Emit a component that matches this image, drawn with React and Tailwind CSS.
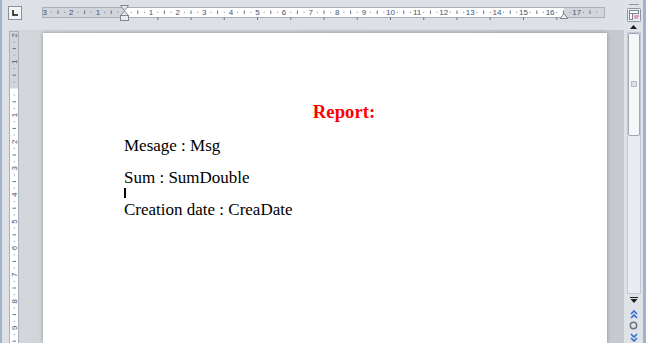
import React from "react";

const CM = 26.6;

function HRuler() {
  // local coords: svg placed at screen x=40, y=3
  const zero = 84.5;
  const left = 2;
  const right = 564;
  const indent = 524;
  const marks = [];
  for (let k = -13; k <= 72; k++) {
    const x = zero + (k * CM) / 4;
    if (x < left + 2 || x > right - 3 || k === 0) continue;
    if (k % 4 === 0) {
      marks.push(
        <text key={k} x={x} y={12.4} textAnchor="middle" fontSize="8" fontFamily="Liberation Sans, sans-serif" fill="#45536a">
          {Math.abs(k / 4)}
        </text>
      );
    } else if (k % 2 === 0) {
      marks.push(<rect key={k} x={x - 0.5} y={7.5} width={1} height={3.5} fill="#6a7381" />);
    } else {
      marks.push(<rect key={k} x={x - 0.5} y={8.8} width={1} height={1} fill="#7a8390" />);
    }
  }
  const tabs = [];
  for (let k = 1; zero + k * 33.25 < indent; k++) {
    tabs.push(<rect key={k} x={zero + k * 33.25 - 0.5} y={14.5} width={1} height={2.5} fill="#6d747d" />);
  }
  return (
    <svg width="570" height="21" className="block">
      <rect x={left + 0.5} y={4.5} width={right - left} height={10} fill="#ffffff" stroke="#a9b0b9" />
      <rect x={left + 1} y={5} width={zero - left - 1} height={9} fill="#d2d6db" />
      <rect x={indent} y={5} width={right - indent} height={9} fill="#d2d6db" />
      {marks}
      {tabs}
      {/* left indent markers */}
      <path d="M80.5 2.5 H88.5 L84.5 7.5 Z" fill="#e9ebee" stroke="#7d8692" />
      <path d="M84.5 8 L80.5 12.5 H88.5 Z" fill="#e9ebee" stroke="#7d8692" />
      <rect x={80.5} y={12.5} width={8} height={5} fill="#e9ebee" stroke="#7d8692" />
      {/* right indent */}
      <path d="M524 10.5 L520 15.5 H528 Z" fill="#e9ebee" stroke="#7d8692" />
    </svg>
  );
}

function VRuler() {
  // local coords: svg placed at screen x=9, y=30
  const zero = 58.5;
  const marks = [];
  for (let k = -9; k <= 40; k++) {
    const y = zero + (k * CM) / 4;
    if (y < 4 || y > 314 || k === 0) continue;
    if (k % 4 === 0) {
      marks.push(
        <text
          key={k}
          transform={`translate(5.4 ${y}) rotate(-90)`}
          x={0}
          y={3}
          textAnchor="middle"
          fontSize="8"
          fontFamily="Liberation Sans, sans-serif"
          fill="#45536a"
        >
          {Math.abs(k / 4)}
        </text>
      );
    } else if (k % 2 === 0) {
      marks.push(<rect key={k} x={3.5} y={y - 0.5} width={3.5} height={1} fill="#6a7381" />);
    } else {
      marks.push(<rect key={k} x={4.8} y={y - 0.5} width={1} height={1} fill="#7a8390" />);
    }
  }
  return (
    <svg width="11" height="313" className="block">
      <rect x={0.5} y={1.5} width={9} height={320} fill="#ffffff" stroke="#a9b0b9" />
      <rect x={1} y={2} width={8} height={zero - 2} fill="#d2d6db" />
      {marks}
    </svg>
  );
}

function Scrollbar() {
  return (
    <div className="flex w-[19px] flex-col items-center bg-[#dfe3e8] pt-[4px]">
      <div className="h-px w-[10px] bg-[#8e97a2]" />
      <svg width="14" height="14" className="mt-[3px] block">
        <rect x="0.5" y="0.5" width="13" height="13" rx="1" fill="#eef0f3" stroke="#8b94a0" />
        <rect x="2.5" y="2.5" width="9" height="3" fill="#ffffff" stroke="#7b8491" />
        <rect x="2.5" y="5.5" width="3" height="6" fill="#ffffff" stroke="#7b8491" />
        <path d="M7 8 H12 M7 10 H11" stroke="#c45a7a" />
      </svg>
      <div className="flex h-[10px] w-[14px] items-center justify-center">
        <svg width="7" height="4">
          <path d="M0 4 L3.5 0 L7 4 Z" fill="#1c1c1c" />
        </svg>
      </div>
      <div className="flex h-[264px] w-[14px] flex-col border border-[#c3c9d1] bg-[#e9ecf0]">
        <div className="flex h-[103px] items-center justify-center rounded-[2px] border border-[#9ea8b5] bg-[#f6f7f9]">
          <div className="h-[6px] w-[6px] border border-[#b9bfc7] bg-[#dde1e6]" />
        </div>
      </div>
      <div className="flex h-[11px] w-[14px] items-center justify-center">
        <svg width="8" height="6">
          <path d="M0 0.5 H8" stroke="#1c1c1c" />
          <path d="M0.5 2 L4 6 L7.5 2 Z" fill="#1c1c1c" />
        </svg>
      </div>
      <div className="mt-[3px] flex h-[12px] items-center justify-center">
        <svg width="8" height="9">
          <path d="M1 4 L4 1 L7 4 M1 8 L4 5 L7 8" stroke="#2f6fd4" strokeWidth="1.6" fill="none" />
        </svg>
      </div>
      <div className="flex h-[11px] items-center justify-center">
        <svg width="9" height="9">
          <circle cx="4.5" cy="4.5" r="3.2" fill="none" stroke="#6f7782" strokeWidth="1.5" />
        </svg>
      </div>
      <div className="flex h-[12px] items-center justify-center">
        <svg width="8" height="9">
          <path d="M1 1 L4 4 L7 1 M1 5 L4 8 L7 5" stroke="#2f6fd4" strokeWidth="1.6" fill="none" />
        </svg>
      </div>
    </div>
  );
}

export default function App() {
  return (
    <div className="flex h-[343px] w-[646px] overflow-hidden bg-[#cbcfd4]">
      <div className="w-[2px] bg-[#9fb3cc]" />
      <div className="flex w-[622px] flex-col">
        <div className="flex h-[30px] items-start bg-[#dde0e4]">
          <div className="ml-[6px] mt-[6px] flex h-[14px] w-[14px] items-center justify-center border border-[#8a929c] bg-[#f3f4f6]">
            <svg width="8" height="8">
              <path d="M2 1 V6 H7" stroke="#111" strokeWidth="1.5" fill="none" />
            </svg>
          </div>
          <div className="ml-[18px] mt-[3px]">
            <HRuler />
          </div>
        </div>
        <div className="flex flex-1 bg-gradient-to-r from-[#d3d6db] to-[#c6cad0]">
          <div className="flex w-[41px]">
            <div className="w-[7px] bg-[#dde0e4]" />
            <div>
              <VRuler />
            </div>
          </div>
          <div className="mt-[3px] w-[564px] bg-white pl-[81px] pr-[43px] pt-[69px] font-['Liberation_Serif',serif] text-black shadow-[0_0_4px_rgba(0,0,0,0.3)]">
            <div className="h-[19px] text-center text-[18.7px] font-bold leading-[19px] text-[#ff0000]">Report:</div>
            <div className="mt-[15.5px] h-[17px] text-[17px] leading-[17px]">Mesage : Msg</div>
            <div className="mt-[15px] h-[17px] text-[17px] leading-[17px]">Sum : SumDouble</div>
            <div className="h-[13.25px]">
              <div className="mt-[2.5px] h-[10px] w-[2px] bg-black" />
            </div>
            <div className="h-[17px] text-[17px] leading-[17px]">Creation date : CreaDate</div>
          </div>
        </div>
      </div>
      <Scrollbar />
      <div className="w-[3px] bg-[#9fb3cc]" />
    </div>
  );
}
